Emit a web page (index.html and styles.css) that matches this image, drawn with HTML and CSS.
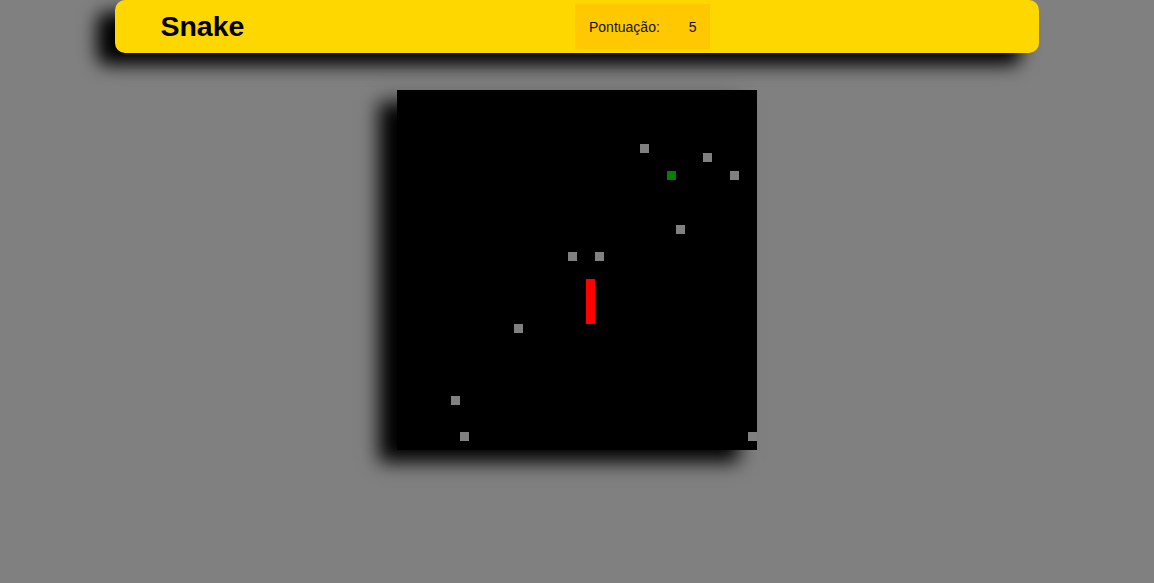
FILE: index.html
```html
<!DOCTYPE html>
<html lang="pt">
<head>
<meta charset="utf-8">
<title>Snake</title>
<link rel="stylesheet" href="styles.css">
</head>
<body>
  <header class="topbar">
    <div class="brand"><h1 class="title">Snake</h1></div>
    <div class="scorearea">
      <div class="score"><span class="score-label">Pontuação:</span><span class="score-value">5</span></div>
    </div>
  </header>
  <main class="stage">
    <div class="board">
      <div class="cell rock" style="grid-area: 7 / 28"></div>
      <div class="cell rock" style="grid-area: 8 / 35"></div>
      <div class="cell rock" style="grid-area: 10 / 38"></div>
      <div class="cell food" style="grid-area: 10 / 31"></div>
      <div class="cell rock" style="grid-area: 16 / 32"></div>
      <div class="cell rock" style="grid-area: 19 / 20"></div>
      <div class="cell rock" style="grid-area: 19 / 23"></div>
      <div class="cell snake" style="grid-area: 22 / 22"></div>
      <div class="cell snake" style="grid-area: 23 / 22"></div>
      <div class="cell snake" style="grid-area: 24 / 22"></div>
      <div class="cell snake" style="grid-area: 25 / 22"></div>
      <div class="cell snake" style="grid-area: 26 / 22"></div>
      <div class="cell rock" style="grid-area: 27 / 14"></div>
      <div class="cell rock" style="grid-area: 35 / 7"></div>
      <div class="cell rock" style="grid-area: 39 / 8"></div>
      <div class="cell rock" style="grid-area: 39 / 40"></div>
    </div>
  </main>
</body>
</html>
```
FILE: styles.css
```css
html, body {
  margin: 0;
  padding: 0;
}
html {
  background: #808080;
}
body {
  min-height: 100vh;
  background: #808080;
  font-family: "Liberation Sans", Arial, sans-serif;
  color: #000;
}
.topbar {
  width: 80%;
  height: 53px;
  margin: 0 auto;
  background: #ffd700;
  border-radius: 10px;
  box-shadow: -18px 12px 18px #000;
  display: flex;
  align-items: center;
}
.brand {
  box-sizing: border-box;
  width: calc(50% - 2px);
  padding-left: 45px;
}
.title {
  margin: 0;
  font-size: 28.5px;
  font-weight: bold;
  line-height: 1;
}
.scorearea {
  flex: 1;
  display: flex;
}
.score {
  height: 45px;
  background: #ffc800;
  display: flex;
  align-items: center;
  gap: 29px;
  padding: 0 13px 0 14px;
  font-size: 14px;
  color: #111;
}
.stage {
  display: flex;
  justify-content: center;
  padding: 37px 0 60px;
}
.board {
  width: 360px;
  height: 360px;
  background: #000;
  box-shadow: -18px 12px 18px #000;
  display: grid;
  grid-template-columns: repeat(40, 9px);
  grid-template-rows: repeat(40, 9px);
}
.cell {
  width: 9px;
  height: 9px;
}
.rock {
  background: #808080;
}
.food {
  background: #008000;
}
.snake {
  background: #ff0000;
}
```
